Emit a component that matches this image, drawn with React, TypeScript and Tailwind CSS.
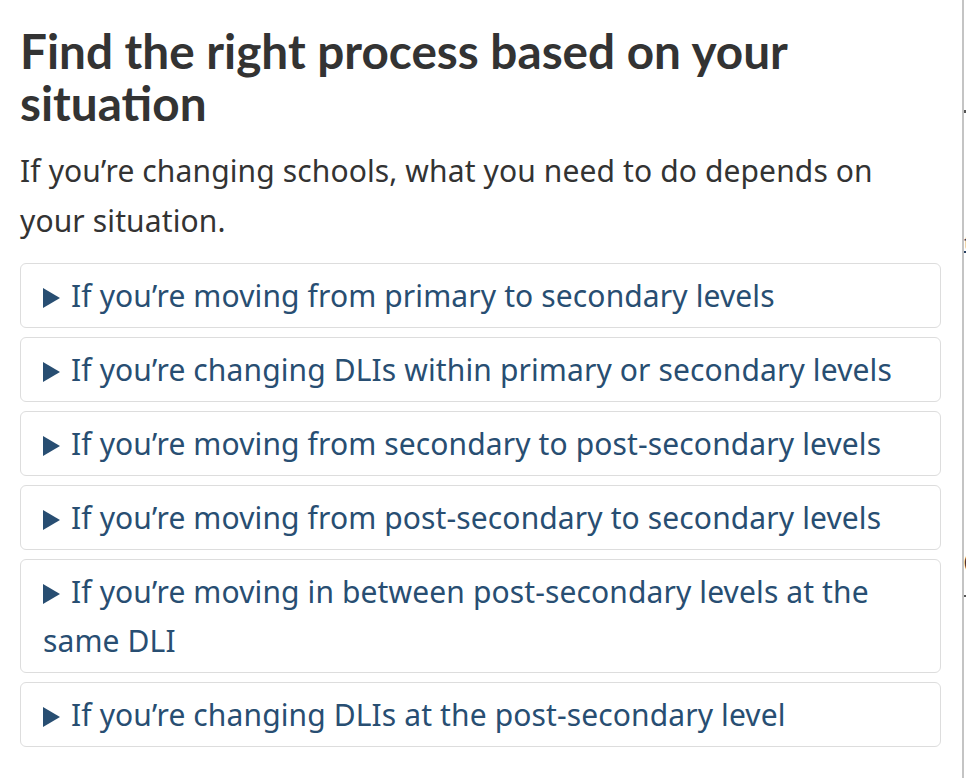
const items = [
  "If you’re moving from primary to secondary levels",
  "If you’re changing DLIs within primary or secondary levels",
  "If you’re moving from secondary to post-secondary levels",
  "If you’re moving from post-secondary to secondary levels",
  "If you’re moving in between post-secondary levels at the same DLI",
  "If you’re changing DLIs at the post-secondary level",
];

function Caret() {
  return (
    <svg
      width="17"
      height="20"
      viewBox="0 0 17 20"
      className="inline-block align-[-1px] mr-[11px]"
      aria-hidden="true"
    >
      <path d="M0 0 L17 10 L0 20 Z" fill="#284e72" />
    </svg>
  );
}

export default function App() {
  return (
    <div className="min-h-[778px] bg-white flex">
      <main className="w-[962px] shrink-0 px-[20px] pr-[21px]">
        {/* Section title */}
        <h2 className="mt-[25px] mb-[17px] font-['Lato',sans-serif] font-bold text-[47.7px] leading-[52px] text-[#333333]">
          Find the right process based on your situation
        </h2>
        <p className="mb-[18px] font-['Noto_Sans',sans-serif] text-[30px] leading-[49.5px] tracking-[0.12px] text-[#333333]">
          If you’re changing schools, what you need to do depends on your situation.
        </p>

        {/* Expandable situations */}
        <div className="flex flex-col gap-[9px]">
          {items.map((label) => (
            <div
              key={label}
              className="border border-[#dddddd] rounded-[6px] px-[22px] py-[7px]"
            >
              <div className="font-['Noto_Sans',sans-serif] text-[30px] leading-[49px] tracking-[0.12px] text-[#284e72] cursor-pointer">
                <Caret />
                {label}
              </div>
            </div>
          ))}
        </div>
      </main>

      {/* Clipped next column */}
      <aside className="flex-1 overflow-hidden border-l-[2px] border-[#c4c4c4] flex flex-col">
        <div className="mt-[110px] h-[3px] w-full bg-[#555555]" />
        <div className="mt-[116px] font-['Noto_Sans',sans-serif] text-[20px] leading-[28px] text-[#284162] underline whitespace-nowrap">
          to
        </div>
        <div className="mt-[290px] font-['Noto_Sans',sans-serif] text-[20px] leading-[28px] text-[#333333] whitespace-nowrap">
          (
        </div>
        <div className="mt-[20px] h-[2px] w-full bg-[#555555]" />
      </aside>
    </div>
  );
}
